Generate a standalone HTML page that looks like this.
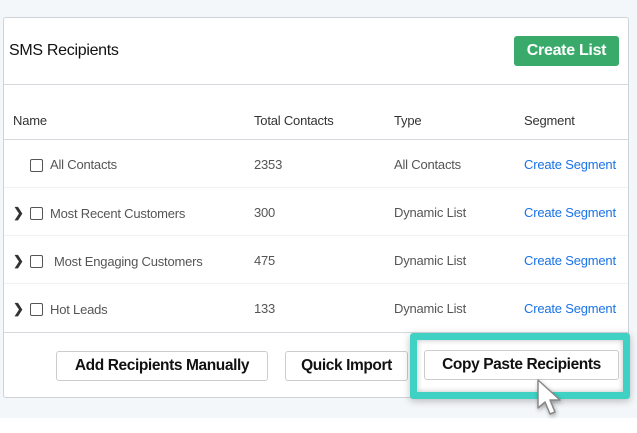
<!DOCTYPE html>
<html><head><style>
*{margin:0;padding:0;box-sizing:border-box}
body{width:637px;height:433px;background:#fff;font-family:"Liberation Sans",Arial,sans-serif;position:relative;overflow:hidden}
.bg{position:absolute;left:0;top:0;width:637px;height:418px;background:#f4f7fa}
.card{position:absolute;left:3px;top:17px;width:626px;height:381px;background:#fff;border:1px solid #cfd3d8;border-radius:3px}
.a{position:absolute;white-space:nowrap}
.t{font-size:13px;color:#555;letter-spacing:-0.2px}
.h{font-size:13px;color:#333;letter-spacing:-0.2px}
.l{font-size:13px;color:#1a73e8;letter-spacing:-0.2px}
.line{position:absolute;left:0;width:624px;height:1px;background:#d5d8dc}
.rl{position:absolute;left:0;width:624px;height:1px;background:#f0f1f3}
.cb{position:absolute;width:13px;height:13px;border:1.3px solid #555;border-radius:2px}
.chev{position:absolute;font-size:13px;font-weight:bold;color:#333}
.btn{position:absolute;height:30px;border:1px solid #ccc;border-radius:3px;background:#fff;font-weight:bold;font-size:15.5px;color:#111;line-height:28px;text-align:center;white-space:nowrap;letter-spacing:-0.4px}
</style></head><body>
<div class="bg"></div>
<div class="card">
<div class="a" style="left:5px;top:24px;font-size:16px;color:#111;letter-spacing:-0.3px">SMS Recipients</div>
<div class="a" style="left:510px;top:18px;width:105px;height:30px;background:#3aaa6a;border-radius:3px;color:#fff;font-weight:bold;font-size:16px;line-height:30px;text-align:center;letter-spacing:-0.3px">Create List</div>
<div class="line" style="top:66px"></div>
<div class="a h" style="left:9px;top:95px">Name</div>
<div class="a h" style="left:250px;top:95px">Total Contacts</div>
<div class="a h" style="left:390px;top:95px">Type</div>
<div class="a h" style="left:520px;top:95px">Segment</div>
<div class="line" style="top:121px"></div>

<div class="cb" style="left:26px;top:141px"></div>
<div class="a t" style="left:46px;top:139px">All Contacts</div>
<div class="a t" style="left:250px;top:139px">2353</div>
<div class="a t" style="left:390px;top:139px">All Contacts</div>
<div class="a l" style="left:520px;top:139px">Create Segment</div>
<div class="rl" style="top:169px"></div>

<div class="chev" style="left:9px;top:187px">&#10095;</div>
<div class="cb" style="left:26px;top:189px"></div>
<div class="a t" style="left:46px;top:188px">Most Recent Customers</div>
<div class="a t" style="left:250px;top:187px">300</div>
<div class="a t" style="left:390px;top:187px">Dynamic List</div>
<div class="a l" style="left:520px;top:187px">Create Segment</div>
<div class="rl" style="top:217px"></div>

<div class="chev" style="left:9px;top:235px">&#10095;</div>
<div class="cb" style="left:26px;top:237px"></div>
<div class="a t" style="left:50px;top:236px">Most Engaging Customers</div>
<div class="a t" style="left:250px;top:235px">475</div>
<div class="a t" style="left:390px;top:235px">Dynamic List</div>
<div class="a l" style="left:520px;top:235px">Create Segment</div>
<div class="rl" style="top:265px"></div>

<div class="chev" style="left:9px;top:283px">&#10095;</div>
<div class="cb" style="left:26px;top:285px"></div>
<div class="a t" style="left:46px;top:284px">Hot Leads</div>
<div class="a t" style="left:250px;top:283px">133</div>
<div class="a t" style="left:390px;top:283px">Dynamic List</div>
<div class="a l" style="left:520px;top:283px">Create Segment</div>
<div class="line" style="top:314px"></div>

<div class="btn" style="left:52px;top:333px;width:212px">Add Recipients Manually</div>
<div class="btn" style="left:281px;top:333px;width:123px">Quick Import</div>
</div>
<div class="a" style="left:410px;top:333px;width:220px;height:66px;border:7px solid #3fd1c4;border-radius:3px;background:#fff;box-shadow:0 2px 8px rgba(0,0,0,.25),inset 0 0 6px rgba(0,0,0,.25)"></div>
<div class="btn" style="left:424px;top:350px;width:195px">Copy Paste Recipients</div>
<svg style="position:absolute;left:534px;top:378px" width="36" height="44" viewBox="0 0 36 44"><path d="M4 2 L4 30 L11 24 L16 36 L21 34 L16 22 L26 22 Z" fill="#fff" stroke="#888" stroke-width="1.5" stroke-linejoin="round" style="filter:drop-shadow(1px 2px 2px rgba(0,0,0,.3))"/></svg>
</body></html>
